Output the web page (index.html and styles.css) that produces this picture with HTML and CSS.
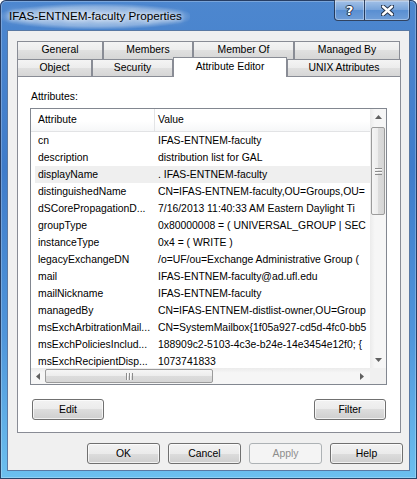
FILE: index.html
```html
<!DOCTYPE html>
<html lang="en">
<head>
  <meta charset="UTF-8">
  <meta name="viewport" content="width=device-width, initial-scale=1.0">
  <title>IFAS-ENTNEM-faculty Properties</title>
  <link rel="stylesheet" href="styles.css">
</head>
<body>
  <div class="window">
    <div class="titlebar">
      <div class="title">IFAS-ENTNEM-faculty Properties</div>
      <div class="caption">
        <div class="cap-btn cap-help">?</div>
        <div class="cap-btn cap-close">
          <svg width="13" height="11" viewBox="0 0 13 11">
            <path d="M2 1.5 L11 9.5 M11 1.5 L2 9.5" stroke="#23324a" stroke-width="4.4" stroke-linecap="round"/>
            <path d="M2 1.5 L11 9.5 M11 1.5 L2 9.5" stroke="#fff" stroke-width="2.4" stroke-linecap="round"/>
          </svg>
        </div>
      </div>
    </div>

    <div class="client">
      <div class="tabs">
        <div class="tab-row back">
          <div class="tab w86">General</div>
          <div class="tab w90">Members</div>
          <div class="tab w101">Member Of</div>
          <div class="tab w106">Managed By</div>
        </div>
        <div class="tab-row front">
          <div class="tab w75">Object</div>
          <div class="tab w81">Security</div>
          <div class="tab w114 active">Attribute Editor</div>
          <div class="tab w114">UNIX Attributes</div>
        </div>
      </div>

      <div class="panel">
        <div class="label">Attributes:</div>
        <div class="listbox">
          <div class="list-content">
            <div class="list-header">
              <div class="h-attr">Attribute</div>
              <div class="h-value">Value</div>
            </div>
            <div class="row"><div>cn</div><div>IFAS-ENTNEM-faculty</div></div>
            <div class="row"><div>description</div><div>distribution list for GAL</div></div>
            <div class="row selected"><div>displayName</div><div>. IFAS-ENTNEM-faculty</div></div>
            <div class="row"><div>distinguishedName</div><div>CN=IFAS-ENTNEM-faculty,OU=Groups,OU=</div></div>
            <div class="row"><div>dSCorePropagationD...</div><div>7/16/2013 11:40:33 AM Eastern Daylight Ti</div></div>
            <div class="row"><div>groupType</div><div>0x80000008 = ( UNIVERSAL_GROUP | SEC</div></div>
            <div class="row"><div>instanceType</div><div>0x4 = ( WRITE )</div></div>
            <div class="row"><div>legacyExchangeDN</div><div>/o=UF/ou=Exchange Administrative Group (</div></div>
            <div class="row"><div>mail</div><div>IFAS-ENTNEM-faculty@ad.ufl.edu</div></div>
            <div class="row"><div>mailNickname</div><div>IFAS-ENTNEM-faculty</div></div>
            <div class="row"><div>managedBy</div><div>CN=IFAS-ENTNEM-distlist-owner,OU=Group</div></div>
            <div class="row"><div>msExchArbitrationMail...</div><div>CN=SystemMailbox{1f05a927-cd5d-4fc0-bb5</div></div>
            <div class="row"><div>msExchPoliciesInclud...</div><div>188909c2-5103-4c3e-b24e-14e3454e12f0; {</div></div>
            <div class="row"><div>msExchRecipientDisp...</div><div>1073741833</div></div>
          </div>

          <div class="vscroll">
            <div class="arrow">
              <svg width="7" height="4" viewBox="0 0 7 4"><path d="M0 4 L3.5 0 L7 4 Z" fill="#606060"/></svg>
            </div>
            <div class="thumb-v"><span class="grip-v"></span></div>
            <div class="arrow down">
              <svg width="7" height="4" viewBox="0 0 7 4"><path d="M0 0 L3.5 4 L7 0 Z" fill="#606060"/></svg>
            </div>
          </div>

          <div class="hscroll">
            <div class="arrow left">
              <svg width="4" height="7" viewBox="0 0 4 7"><path d="M4 0 L0 3.5 L4 7 Z" fill="#606060"/></svg>
            </div>
            <div class="thumb-h"><span class="grip-h"></span></div>
            <div class="arrow right">
              <svg width="4" height="7" viewBox="0 0 4 7"><path d="M0 0 L4 3.5 L0 7 Z" fill="#606060"/></svg>
            </div>
          </div>

          <div class="corner"></div>
        </div>

        <div class="panel-buttons">
          <button class="btn">Edit</button>
          <button class="btn">Filter</button>
        </div>
      </div>

      <div class="dialog-buttons">
        <button class="btn wide">OK</button>
        <button class="btn wide">Cancel</button>
        <button class="btn wide" disabled>Apply</button>
        <button class="btn wide">Help</button>
      </div>
    </div>
  </div>
</body>
</html>
```

FILE: styles.css
```css
* {
  box-sizing: border-box;
}

body {
  margin: 0;
  font-family: "Liberation Sans", Arial, sans-serif;
  font-size: 10.4px;
  color: #000;
  background: #fff;
}

/* Aero window frame */
.window {
  width: 417px;
  height: 479px;
  display: flex;
  flex-direction: column;
  padding: 0 7px 8px 7px;
  border-radius: 6px 6px 0 0;
  background: linear-gradient(180deg, #4d87cf 0%, #3f7cca 35%, #4f95da 70%, #6cc0ef 100%);
  box-shadow: inset 0 0 0 1px rgba(24, 44, 80, 0.85), inset 0 0 0 2px rgba(255, 255, 255, 0.25);
}

.titlebar {
  height: 30px;
  display: flex;
  justify-content: space-between;
  align-items: flex-start;
}

/* caption text sits on a soft white glow */
.title {
  margin: 4px 0 0 -6px;
  padding: 5px 8px 6px 8px;
  font-size: 11.7px;
  line-height: 14px;
  border-radius: 12px;
  background: radial-gradient(ellipse at center, rgba(255, 255, 255, 0.6) 0%, rgba(255, 255, 255, 0.35) 55%, rgba(255, 255, 255, 0) 75%);
  text-shadow: 0 0 4px #fff, 0 0 8px rgba(255, 255, 255, 0.9);
}

.caption {
  display: flex;
  height: 21px;
}

.cap-btn {
  display: flex;
  align-items: center;
  justify-content: center;
  border: 1px solid rgba(20, 36, 64, 0.8);
  border-top: none;
  background: linear-gradient(180deg, rgba(255, 255, 255, 0.5) 0%, rgba(255, 255, 255, 0.25) 48%, rgba(255, 255, 255, 0.08) 52%, rgba(255, 255, 255, 0.2) 100%);
  box-shadow: inset 0 0 0 1px rgba(255, 255, 255, 0.35);
}

.cap-help {
  width: 30px;
  border-right: none;
  border-radius: 0 0 0 4px;
  color: #fff;
  font-family: "DejaVu Sans", sans-serif;
  font-weight: bold;
  font-size: 13px;
  text-shadow: 0 0 1px #23324a, 1px 0 0 #23324a, -1px 0 0 #23324a, 0 1px 0 #23324a, 0 -1px 0 #23324a;
}

.cap-close {
  width: 46px;
  border-radius: 0 0 4px 0;
}

/* client area of the dialog */
.client {
  flex: 1;
  display: flex;
  flex-direction: column;
  padding: 10px 6px 6px 9px;
  background: #f0f0f0;
  border: 1px solid #5a79a3;
}

.tabs {
  display: flex;
  flex-direction: column;
  margin-right: 2px;
}

.tab-row {
  display: flex;
}

.tab-row.back {
  height: 18px;
}

.tab-row.front {
  height: 17px;
  align-items: flex-start;
}

.tab {
  height: 100%;
  border: 1px solid #898c95;
  border-bottom: none;
  text-align: center;
  line-height: 16px;
  background: linear-gradient(180deg, #f4f4f4 0%, #ececec 50%, #e0e0e0 50%, #d6d6d6 100%);
}

.tab.active {
  position: relative;
  z-index: 1;
  height: 20px;
  margin-top: -2px;
  line-height: 17px;
  background: #fff;
}

.w75 { width: 75px; }
.w81 { width: 81px; }
.w86 { width: 86px; }
.w90 { width: 90px; }
.w101 { width: 101px; }
.w106 { width: 106px; }
.w114 { width: 114px; }

.panel {
  height: 357px;
  margin-right: 2px;
  display: flex;
  flex-direction: column;
  padding: 13px 13px 12px 12px;
  background: #fff;
  border: 1px solid #898c95;
}

.label {
  padding-left: 1px;
  line-height: 14px;
}

/* list view with its scrollbars */
.listbox {
  height: 277px;
  margin-top: 4px;
  display: grid;
  grid-template-columns: 339px 16px;
  grid-template-rows: 259px 16px;
  border: 1px solid #828790;
}

.list-content {
  overflow: hidden;
}

.list-header {
  display: flex;
  height: 23px;
  line-height: 22px;
  border-bottom: 1px solid #e2e3e5;
  background: linear-gradient(180deg, #fff 0%, #fff 55%, #f6f7f8 100%);
}

.h-attr {
  width: 124px;
  padding-left: 7px;
  border-right: 1px solid #e3e4e6;
}

.h-value {
  padding-left: 3px;
}

.row {
  display: grid;
  grid-template-columns: 120px 1fr;
  margin-left: 4px;
  height: 17px;
  line-height: 17px;
  white-space: nowrap;
}

.row div {
  overflow: hidden;
  padding-left: 3px;
}

.row.selected {
  background: #efefef;
}

.vscroll {
  display: flex;
  flex-direction: column;
  background: linear-gradient(90deg, #ebebeb 0%, #f6f6f6 30%, #f6f6f6 100%);
}

.hscroll {
  display: flex;
  background: linear-gradient(180deg, #ebebeb 0%, #f6f6f6 30%, #f6f6f6 100%);
}

.corner {
  background: #f0f0f0;
}

.arrow {
  height: 16px;
  display: flex;
  align-items: center;
  justify-content: center;
}

.arrow.down {
  margin-top: auto;
}

.arrow.left {
  width: 14px;
  height: auto;
}

.arrow.right {
  width: 16px;
  height: auto;
  margin-left: auto;
}

.thumb-v {
  height: 88px;
  margin: 2px 1px 0 1px;
  display: flex;
  align-items: center;
  justify-content: center;
  border: 1px solid #9b9b9b;
  border-radius: 2px;
  background: linear-gradient(90deg, #f5f5f5 0%, #ececec 50%, #dcdcdc 51%, #d6d6d6 100%);
}

.thumb-h {
  width: 168px;
  margin: 1px 0;
  display: flex;
  align-items: center;
  justify-content: center;
  border: 1px solid #9b9b9b;
  border-radius: 2px;
  background: linear-gradient(180deg, #f5f5f5 0%, #ececec 50%, #dcdcdc 51%, #d6d6d6 100%);
}

.grip-v {
  width: 7px;
  height: 7px;
  background: repeating-linear-gradient(180deg, #8c8c8c 0, #8c8c8c 1px, #fafafa 1px, #fafafa 2px, transparent 2px, transparent 3px);
}

.grip-h {
  width: 7px;
  height: 7px;
  background: repeating-linear-gradient(90deg, #8c8c8c 0, #8c8c8c 1px, #fafafa 1px, #fafafa 2px, transparent 2px, transparent 3px);
}

.panel-buttons {
  display: flex;
  justify-content: space-between;
  margin-top: 14px;
  padding: 0 1px 0 2px;
}

.dialog-buttons {
  display: flex;
  justify-content: flex-end;
  gap: 8px;
  margin-top: 10px;
}

.btn {
  width: 72px;
  height: 21px;
  padding: 0;
  font-family: inherit;
  font-size: inherit;
  color: #000;
  border: 1px solid #707070;
  border-radius: 3px;
  background: linear-gradient(180deg, #f2f2f2 0%, #ebebeb 50%, #dddddd 50%, #cfcfcf 100%);
  box-shadow: inset 0 0 0 1px rgba(255, 255, 255, 0.7);
}

.btn.wide {
  width: 73px;
}

.btn:disabled {
  color: #8d8d8d;
  border-color: #adb2b5;
  background: #f4f4f4;
  box-shadow: none;
}
```
